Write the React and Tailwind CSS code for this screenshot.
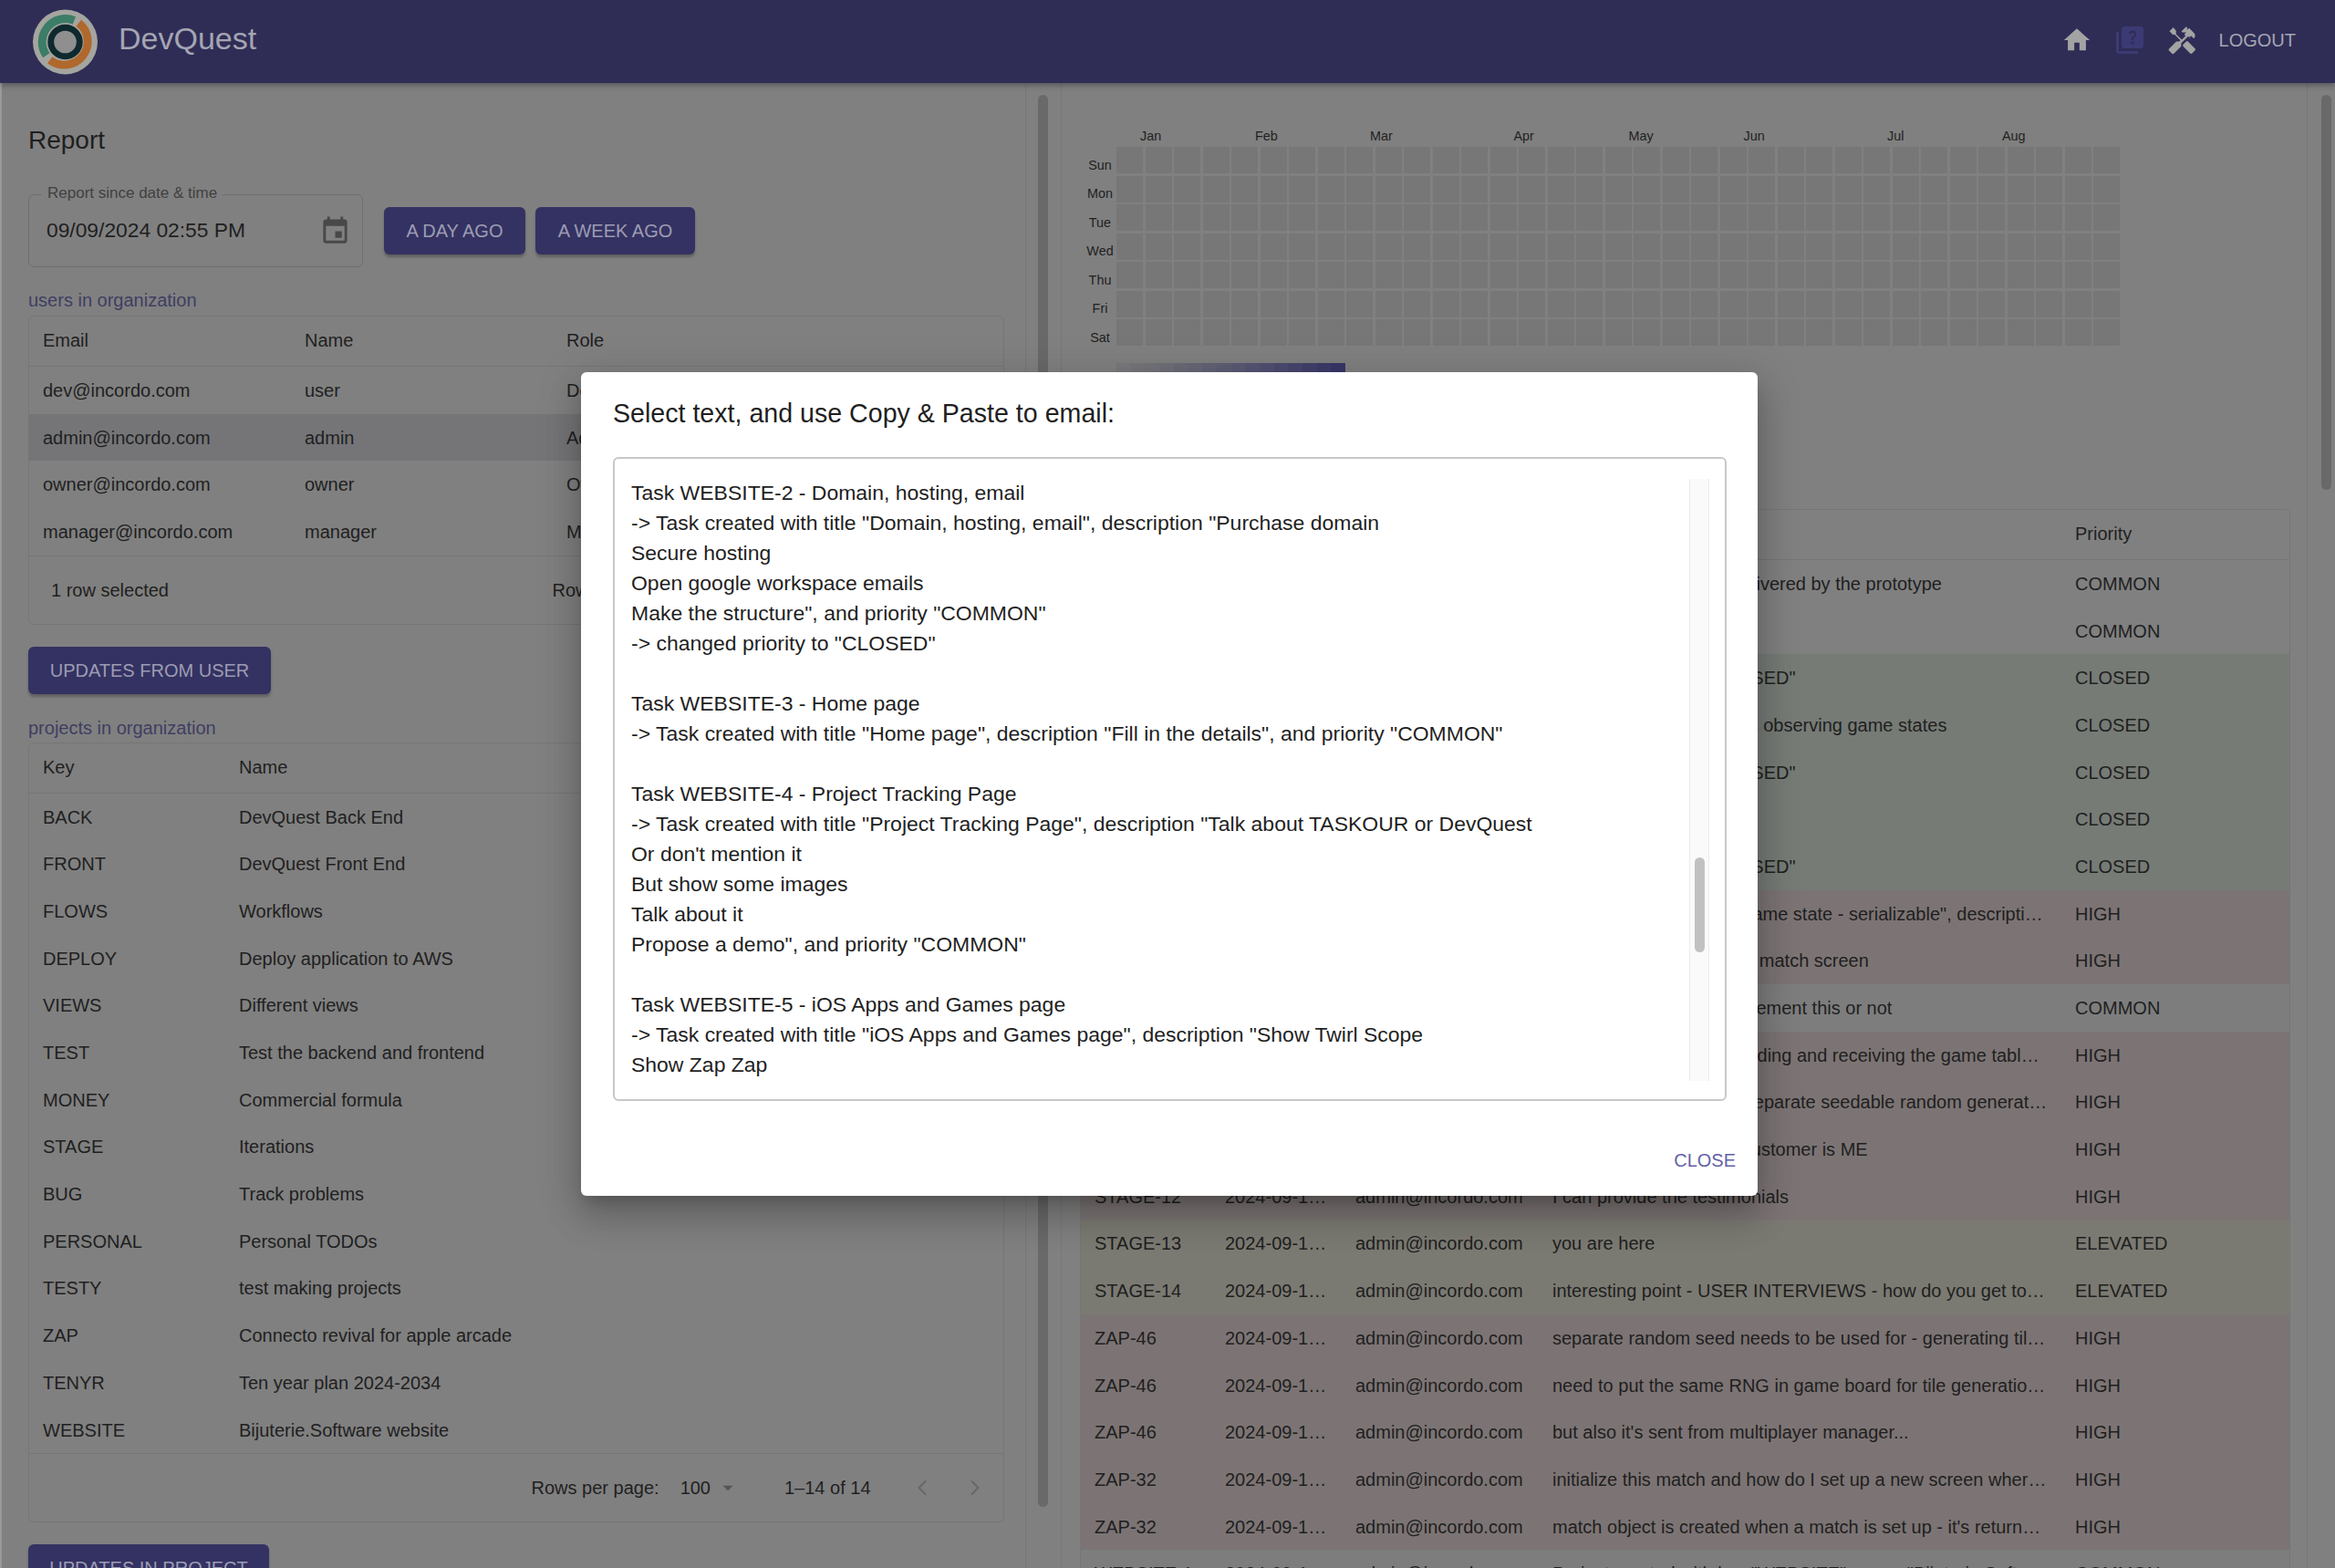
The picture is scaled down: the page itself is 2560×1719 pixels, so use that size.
import { ChevronLeft, ChevronRight } from 'lucide-react';

const users = [
  ['dev@incordo.com', 'user', 'Developer'],
  ['admin@incordo.com', 'admin', 'Admin'],
  ['owner@incordo.com', 'owner', 'Owner'],
  ['manager@incordo.com', 'manager', 'Manager'],
];

const projects = [
  ['BACK', 'DevQuest Back End'],
  ['FRONT', 'DevQuest Front End'],
  ['FLOWS', 'Workflows'],
  ['DEPLOY', 'Deploy application to AWS'],
  ['VIEWS', 'Different views'],
  ['TEST', 'Test the backend and frontend'],
  ['MONEY', 'Commercial formula'],
  ['STAGE', 'Iterations'],
  ['BUG', 'Track problems'],
  ['PERSONAL', 'Personal TODOs'],
  ['TESTY', 'test making projects'],
  ['ZAP', 'Connecto revival for apple arcade'],
  ['TENYR', 'Ten year plan 2024-2034'],
  ['WEBSITE', 'Bijuterie.Software website'],
];

const updates = [
  ['FLOWS-1', 'The main scenario as delivered by the prototype', 'COMMON', ''],
  ['FLOWS-2', 'Landing page', 'COMMON', ''],
  ['FLOWS-3', 'changed priority to "CLOSED"', 'CLOSED', 'bg-[#767b76]'],
  ['FLOWS-4', 'Flows for multiple players observing game states', 'CLOSED', 'bg-[#767b76]'],
  ['FLOWS-5', 'changed priority to "CLOSED"', 'CLOSED', 'bg-[#767b76]'],
  ['FLOWS-6', 'Lobby', 'CLOSED', 'bg-[#767b76]'],
  ['FLOWS-7', 'changed priority to "CLOSED"', 'CLOSED', 'bg-[#767b76]'],
  ['STAGE-5', 'Task created with title "Game state - serializable", descripti…', 'HIGH', 'bg-[#7c7474]'],
  ['STAGE-6', 'Set up the first steps of a match screen', 'HIGH', 'bg-[#7c7474]'],
  ['STAGE-7', 'Need to decide if we implement this or not', 'COMMON', 'bg-[#7d7d7d]'],
  ['STAGE-8', 'Multiplayer manager: sending and receiving the game tabl…', 'HIGH', 'bg-[#7c7474]'],
  ['STAGE-9', 'We need to first have a separate seedable random generat…', 'HIGH', 'bg-[#7c7474]'],
  ['STAGE-11', 'The very first, and only customer is ME', 'HIGH', 'bg-[#7c7474]'],
  ['STAGE-12', 'I can provide the testimonials', 'HIGH', 'bg-[#7c7474]'],
  ['STAGE-13', 'you are here', 'ELEVATED', 'bg-[#7b7a72]'],
  ['STAGE-14', 'interesting point - USER INTERVIEWS - how do you get to…', 'ELEVATED', 'bg-[#7b7a72]'],
  ['ZAP-46', 'separate random seed needs to be used for - generating til…', 'HIGH', 'bg-[#7c7474]'],
  ['ZAP-46', 'need to put the same RNG in game board for tile generatio…', 'HIGH', 'bg-[#7c7474]'],
  ['ZAP-46', "but also it's sent from multiplayer manager...", 'HIGH', 'bg-[#7c7474]'],
  ['ZAP-32', 'initialize this match and how do I set up a new screen wher…', 'HIGH', 'bg-[#7c7474]'],
  ['ZAP-32', "match object is created when a match is set up - it's return…", 'HIGH', 'bg-[#7c7474]'],
  ['WEBSITE-1', 'Project created with key "WEBSITE", name "Bijuterie.Softw…', 'COMMON', 'bg-[#7d7d7d]'],
];

const months = [
  ['Jan', 'col-start-1'],
  ['Feb', 'col-start-5'],
  ['Mar', 'col-start-9'],
  ['Apr', 'col-start-14'],
  ['May', 'col-start-18'],
  ['Jun', 'col-start-22'],
  ['Jul', 'col-start-27'],
  ['Aug', 'col-start-31'],
];

const days = ['Sun', 'Mon', 'Tue', 'Wed', 'Thu', 'Fri', 'Sat'];

const legend = [
  '#7a7a7c', '#77777b', '#73737a', '#6f6f79', '#6b6b78', '#676777', '#636376', '#5f5f75',
  '#5b5a74', '#565573', '#515072', '#4c4b70', '#47466e', '#42416c', '#3d3c6a', '#383768',
];

const emailText = `Task WEBSITE-2 - Domain, hosting, email
-> Task created with title "Domain, hosting, email", description "Purchase domain
Secure hosting
Open google workspace emails
Make the structure", and priority "COMMON"
-> changed priority to "CLOSED"

Task WEBSITE-3 - Home page
-> Task created with title "Home page", description "Fill in the details", and priority "COMMON"

Task WEBSITE-4 - Project Tracking Page
-> Task created with title "Project Tracking Page", description "Talk about TASKOUR or DevQuest
Or don't mention it
But show some images
Talk about it
Propose a demo", and priority "COMMON"

Task WEBSITE-5 - iOS Apps and Games page
-> Task created with title "iOS Apps and Games page", description "Show Twirl Scope
Show Zap Zap`;

function Logo() {
  return (
    <svg width="71" height="72" viewBox="0 0 72 72" className="shrink-0">
      <circle cx="36" cy="36" r="36" fill="#a5a5a0" />
      <path d="M46 12 A26 26 0 0 0 15 51" fill="none" stroke="#3c7d68" strokeWidth="9" />
      <path d="M51 15 A26 26 0 1 1 19 56" fill="none" stroke="#b0682c" strokeWidth="9" />
      <circle cx="36" cy="36" r="16" fill="#8f8f8f" stroke="#0f2a2e" strokeWidth="7" />
    </svg>
  );
}

function HeaderIcons() {
  return (
    <div className="mb-[3px] flex items-center">
      <svg width="34" height="34" viewBox="0 0 24 24" fill="#a3a3a3">
        <path d="M10 20v-6h4v6h5v-8h3L12 3 2 12h3v8z" />
      </svg>
      <svg width="36" height="36" viewBox="0 0 24 24" fill="#3c3a74" className="ml-[23px]">
        <path d="M4 6H2v14c0 1.1.9 2 2 2h14v-2H4V6z" />
        <path d="M20 2H8c-1.1 0-2 .9-2 2v12c0 1.1.9 2 2 2h12c1.1 0 2-.9 2-2V4c0-1.1-.9-2-2-2zm-5.99 13c-.59 0-1.05-.47-1.05-1.05 0-.59.47-1.04 1.05-1.04.59 0 1.04.45 1.04 1.04-.01.58-.45 1.05-1.04 1.05zm2.5-6.17c-.63.93-1.23 1.21-1.56 1.81-.13.24-.18.4-.18 1.18h-1.52c0-.41-.06-1.08.26-1.65.41-.73 1.18-1.16 1.63-1.8.48-.68.21-1.94-1.14-1.94-.88 0-1.32.67-1.5 1.23l-1.37-.57C11.51 5.96 12.52 5 13.99 5c1.23 0 2.08.56 2.51 1.26.37.61.58 1.73.01 2.57z" />
      </svg>
      <svg width="36" height="36" viewBox="0 0 24 24" fill="#a3a3a3" className="ml-[21px]">
        <path d="m21.67 18.17-5.3-5.3h-.99l-2.54 2.54v.99l5.3 5.3c.39.39 1.02.39 1.41 0l2.12-2.12c.39-.38.39-1.02 0-1.41z" />
        <path d="m17.34 10.19 1.41-1.41 2.12 2.12c1.17-1.17 1.17-3.07 0-4.24l-3.54-3.54-1.41 1.41V2.81l-.7-.7-3.54 3.54.71.71h2.83l-1.41 1.41 1.06 1.06-2.89 2.89-4.13-4.13V5.17L5.82 2.72 3 5.55l2.45 2.45h1.41l4.13 4.13-.85.85H8.02l-5.3 5.3c-.39.39-.39 1.02 0 1.41l2.12 2.12c.39.39 1.02.39 1.41 0l5.3-5.3v-2.12l5.15-5.15 1.64 1.64z" />
      </svg>
      <span className="ml-[23px] text-[20px] text-[#a5a5b2]">LOGOUT</span>
    </div>
  );
}

function PrimaryButton({ children, className = '' }) {
  return (
    <div className={`flex h-[52px] items-center justify-center rounded-[6px] bg-[#343262] text-[20px] text-[#9c9cb4] shadow-[0_3px_3px_rgba(0,0,0,0.25)] ${className}`}>
      {children}
    </div>
  );
}

function Pagination({ range, rangeWidth }) {
  return (
    <div className="ml-auto flex items-center text-[20px] text-[#1f1f1f]">
      <span>Rows per page:</span>
      <span className="ml-[23px]">100</span>
      <svg width="26" height="26" viewBox="0 0 24 24" fill="#555555" className="ml-[6px]">
        <path d="M7 10l5 5 5-5z" />
      </svg>
      <span className={`ml-[49px] ${rangeWidth}`}>{range}</span>
      <ChevronLeft size={28} strokeWidth={1.6} color="#666666" className="ml-[42px]" />
      <ChevronRight size={28} strokeWidth={1.6} color="#666666" className="ml-[30px]" />
      <span className="w-[17px]" />
    </div>
  );
}

function Heatmap() {
  return (
    <div className="flex">
      <div className="mt-[50px] w-[37px] shrink-0 pl-[3px]">
        {days.map((day) => (
          <div key={day} className="flex h-[31.5px] items-center justify-center text-[14.4px] text-[#1f1f1f]">
            {day}
          </div>
        ))}
      </div>
      <div className="ml-[1px]">
        <div className="grid h-[45px] grid-cols-[repeat(35,29px)] gap-x-[2.5px] pt-[25px]">
          {months.map(([name, col]) => (
            <span key={name} className={`${col} row-start-1 whitespace-nowrap pl-[26px] text-[14.4px] leading-[17px] text-[#1f1f1f]`}>
              {name}
            </span>
          ))}
        </div>
        <div className="grid grid-cols-[repeat(35,29px)] gap-[2.5px]">
          {Array.from({ length: 245 }, (_, i) => (
            <div key={i} className="h-[29px] bg-[#777777]" />
          ))}
        </div>
        <div className="mt-[19px] flex">
          {legend.map((color) => (
            <div key={color} className="h-[16px] w-[15.7px]" style={{ background: color }} />
          ))}
        </div>
      </div>
    </div>
  );
}

export default function App() {
  return (
    <div className="relative flex h-[1719px] w-[2560px] flex-col overflow-hidden bg-[#808080] font-['Liberation_Sans',sans-serif] text-[20px] text-[#1f1f1f]">
      <header className="z-10 flex h-[91px] shrink-0 items-center bg-[#2f2d56] pl-[36px] pr-[43px] shadow-[0_3px_6px_rgba(0,0,0,0.3)]">
        <Logo />
        <span className="mb-[6px] ml-[23px] text-[34px] text-[#a5a5b2]">DevQuest</span>
        <div className="ml-auto">
          <HeaderIcons />
        </div>
      </header>

      <main className="flex min-h-0 flex-1 border-l-2 border-[#9a9a9a]">
        {/* Left panel */}
        <section className="w-[1123px] shrink-0 border-r border-[#787878] pl-[29px]">
          <h1 className="mt-[46px] text-[28px] leading-[34px]">Report</h1>
          <div className="mt-[42px] flex items-start">
            <div className="relative flex h-[80px] w-[367px] items-center rounded-[6px] border border-[#6e6e6e] pl-[19px] pr-[12px]">
              <span className="absolute left-[14px] top-[-12px] bg-[#808080] px-[6px] text-[17px] leading-[20px] text-[#404040]">
                Report since date &amp; time
              </span>
              <span className="mb-[2px] text-[22.8px]">09/09/2024 02:55 PM</span>
              <svg width="35" height="35" viewBox="0 0 24 24" fill="#484848" className="ml-auto">
                <path d="M17 12h-5v5h5v-5zM16 1v2H8V1H6v2H5c-1.11 0-1.99.9-1.99 2L3 19c0 1.1.89 2 2 2h14c1.1 0 2-.9 2-2V5c0-1.1-.9-2-2-2h-1V1h-2zm3 18H5V8h14v11z" />
              </svg>
            </div>
            <PrimaryButton className="ml-[23px] mt-[14px] w-[155px]">A DAY AGO</PrimaryButton>
            <PrimaryButton className="ml-[11px] mt-[14px] w-[175px]">A WEEK AGO</PrimaryButton>
          </div>

          <p className="mt-[24px] text-[20px] leading-[24px] text-[#3f3e62]">users in organization</p>
          <div className="mt-[5px] w-[1070px] rounded-[6px] border border-[#767676]">
            <div className="flex h-[55px] items-center border-b border-[#767676] pb-[3px] pl-[15px]">
              <span className="w-[287px]">Email</span>
              <span className="w-[287px]">Name</span>
              <span>Role</span>
            </div>
            {users.map(([email, name, role], i) => (
              <div key={email} className={`flex h-[51.7px] items-center pl-[15px] ${i === 1 ? 'bg-[#757578]' : ''}`}>
                <span className="w-[287px]">{email}</span>
                <span className="w-[287px]">{name}</span>
                <span>{role}</span>
              </div>
            ))}
            <div className="flex h-[75px] items-center border-t border-[#767676] pl-[24px]">
              <span>1 row selected</span>
              <Pagination range="1–4 of 4" rangeWidth="w-[72px]" />
            </div>
          </div>

          <PrimaryButton className="mt-[24px] w-[266px]">UPDATES FROM USER</PrimaryButton>

          <p className="mt-[25px] text-[20px] leading-[24px] text-[#3f3e62]">projects in organization</p>
          <div className="mt-[4px] w-[1070px] rounded-[6px] border border-[#767676]">
            <div className="flex h-[55px] items-center border-b border-[#767676] pb-[1px] pl-[15px]">
              <span className="w-[215px]">Key</span>
              <span>Name</span>
            </div>
            {projects.map(([key, name]) => (
              <div key={key} className="flex h-[51.7px] items-center pl-[15px]">
                <span className="w-[215px]">{key}</span>
                <span>{name}</span>
              </div>
            ))}
            <div className="flex h-[75px] items-center border-t border-[#767676]">
              <Pagination range="1–14 of 14" rangeWidth="w-[95px]" />
            </div>
          </div>

          <PrimaryButton className="mt-[24px] w-[264px]">UPDATES IN PROJECT</PrimaryButton>
        </section>

        {/* Left scrollbar */}
        <div className="w-[39px] shrink-0 border-r border-[#787878] pl-[13px] pt-[13px]">
          <div className="h-[1548px] w-[11px] rounded-full bg-[#696969]" />
        </div>

        {/* Right panel */}
        <section className="w-[1366px] shrink-0 border-r border-[#787878]">
          <div className="pl-[22px] pt-[25px]">
            <Heatmap />
          </div>
          <div className="ml-[20px] mt-[144px] w-[1327px] rounded-[6px] border border-[#767676]">
            <div className="flex h-[55px] items-center border-b border-[#767676] pb-[3px] pl-[15px]">
              <span className="ml-[1075px]">Priority</span>
            </div>
            {updates.map(([key, text, priority, tint], i) => (
              <div key={i} className={`flex h-[51.7px] items-center pl-[15px] ${tint}`}>
                <span className="w-[143px] shrink-0">{key}</span>
                <span className="w-[143px] shrink-0">2024-09-1…</span>
                <span className="w-[216px] shrink-0">admin@incordo.com</span>
                <span className="w-[573px] shrink-0 whitespace-nowrap">{text}</span>
                <span>{priority}</span>
              </div>
            ))}
          </div>
        </section>

        {/* Right scrollbar */}
        <div className="pl-[15px] pt-[13px]">
          <div className="h-[433px] w-[11px] rounded-full bg-[#696969]" />
        </div>
      </main>

      {/* Email dialog */}
      <div className="absolute left-[637px] top-[408px] flex h-[903px] w-[1290px] flex-col rounded-[6px] bg-white shadow-[0_11px_15px_-7px_rgba(0,0,0,0.2),0_24px_38px_3px_rgba(0,0,0,0.14),0_9px_46px_8px_rgba(0,0,0,0.12)]">
        <h2 className="ml-[35px] mt-[27px] text-[28.6px] leading-[36px] text-[#1f1f1f]">
          Select text, and use Copy &amp; Paste to email:
        </h2>
        <div className="ml-[35px] mt-[30px] flex h-[706px] w-[1221px] rounded-[6px] border-2 border-[#c8c8c8] pl-[18px]">
          <div className="h-[680px] flex-1 overflow-hidden whitespace-pre-wrap pt-[21px] text-[22.97px] leading-[33px] text-[#1f1f1f]">
            {emailText}
          </div>
          <div className="mr-[17px] mt-[22px] h-[660px] w-[22px] border-x border-[#ececec] bg-[#fafafa] pl-[5px] pt-[415px]">
            <div className="h-[104px] w-[11px] rounded-full bg-[#c1c1c1]" />
          </div>
        </div>
        <div className="mr-[24px] mt-[49px] text-right text-[20px] leading-[32px] text-[#635fa8]">CLOSE</div>
      </div>
    </div>
  );
}
